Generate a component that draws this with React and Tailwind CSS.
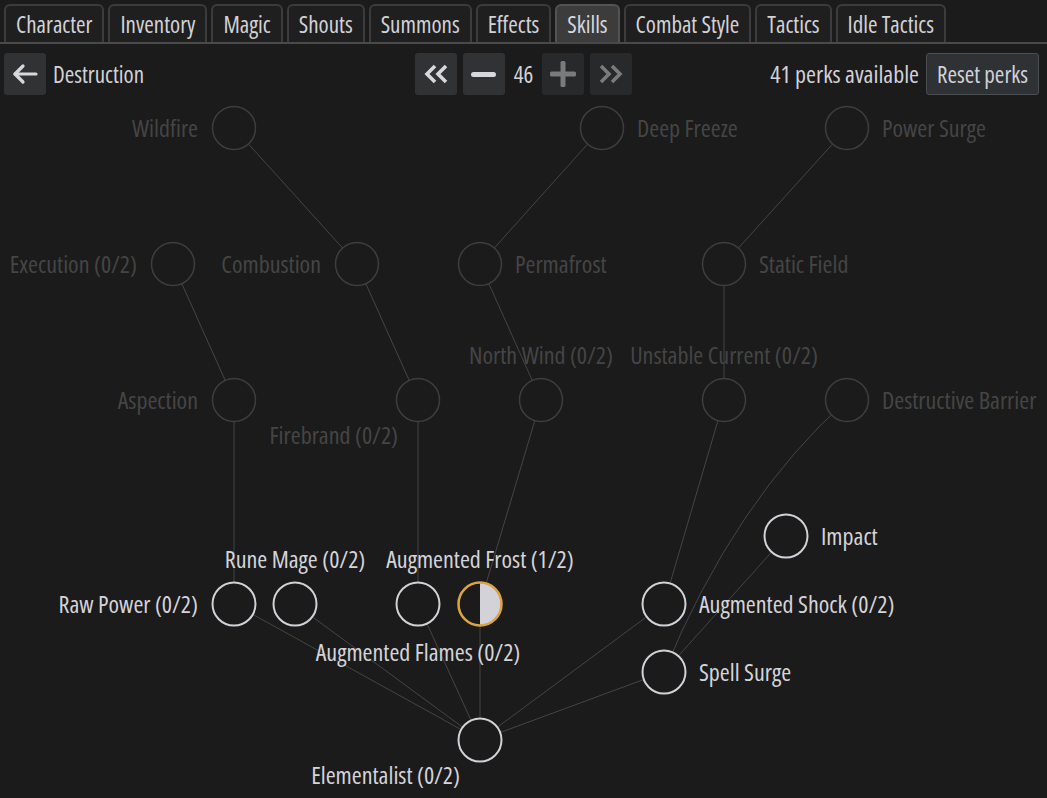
import React from 'react';

const TABS = ['Character', 'Inventory', 'Magic', 'Shouts', 'Summons', 'Effects', 'Skills', 'Combat Style', 'Tactics', 'Idle Tactics'];

// canvas starts below the toolbar, node coords are page coords
const TOP = 97;

const NODES = [
  { id: 'wildfire', label: 'Wildfire', x: 234, y: 128, pos: 'left' },
  { id: 'deepFreeze', label: 'Deep Freeze', x: 602, y: 128, pos: 'right' },
  { id: 'powerSurge', label: 'Power Surge', x: 847, y: 128, pos: 'right' },
  { id: 'execution', label: 'Execution (0/2)', x: 173, y: 264, pos: 'left' },
  { id: 'combustion', label: 'Combustion', x: 357, y: 264, pos: 'left' },
  { id: 'permafrost', label: 'Permafrost', x: 480, y: 264, pos: 'right' },
  { id: 'staticField', label: 'Static Field', x: 724, y: 264, pos: 'right' },
  { id: 'aspection', label: 'Aspection', x: 234, y: 400, pos: 'left' },
  { id: 'firebrand', label: 'Firebrand (0/2)', x: 418, y: 400, pos: 'bottomLeft' },
  { id: 'northWind', label: 'North Wind (0/2)', x: 541, y: 400, pos: 'top' },
  { id: 'unstable', label: 'Unstable Current (0/2)', x: 724, y: 400, pos: 'top' },
  { id: 'barrier', label: 'Destructive Barrier', x: 847, y: 400, pos: 'right' },
  { id: 'impact', label: 'Impact', x: 786, y: 536, pos: 'right', state: 'open' },
  { id: 'rawPower', label: 'Raw Power (0/2)', x: 234, y: 604, pos: 'left', state: 'open' },
  { id: 'runeMage', label: 'Rune Mage (0/2)', x: 295, y: 604, pos: 'top', state: 'open' },
  { id: 'augFlames', label: 'Augmented Flames (0/2)', x: 418, y: 604, pos: 'bottom', state: 'open' },
  { id: 'augFrost', label: 'Augmented Frost (1/2)', x: 480, y: 604, pos: 'top', state: 'half' },
  { id: 'augShock', label: 'Augmented Shock (0/2)', x: 664, y: 604, pos: 'right', state: 'open' },
  { id: 'spellSurge', label: 'Spell Surge', x: 664, y: 672, pos: 'right', state: 'open' },
  { id: 'elementalist', label: 'Elementalist (0/2)', x: 480, y: 740, pos: 'bottomLeft', state: 'open' },
];

const EDGES = [
  ['wildfire', 'combustion'],
  ['deepFreeze', 'permafrost'],
  ['powerSurge', 'staticField'],
  ['execution', 'aspection'],
  ['combustion', 'firebrand'],
  ['permafrost', 'northWind'],
  ['staticField', 'unstable'],
  ['aspection', 'rawPower'],
  ['firebrand', 'augFlames'],
  ['northWind', 'augFrost'],
  ['unstable', 'augShock'],
  ['impact', 'spellSurge'],
  ['rawPower', 'elementalist'],
  ['runeMage', 'elementalist'],
  ['augFlames', 'elementalist'],
  ['augFrost', 'elementalist'],
  ['augShock', 'elementalist'],
  ['spellSurge', 'elementalist'],
];

const byId = Object.fromEntries(NODES.map((n) => [n.id, n]));

const labelPlacement = {
  left: { dx: -36, dy: 0, cls: '-translate-x-full -translate-y-1/2' },
  right: { dx: 35, dy: 0, cls: '-translate-y-1/2' },
  top: { dx: 0, dy: -45, cls: '-translate-x-1/2 -translate-y-1/2' },
  bottom: { dx: 0, dy: 48, cls: '-translate-x-1/2 -translate-y-1/2' },
  bottomLeft: { dx: -20, dy: 35, cls: '-translate-x-full -translate-y-1/2' },
};

function Tabs() {
  return (
    <div className="flex gap-1 px-1 pt-1 border-b-2 border-[#4a4a4a]">
      {TABS.map((t) => {
        const active = t === 'Skills';
        return (
          <div
            key={t}
            className={`h-[38px] px-[10px] flex items-center border-2 border-b-0 rounded-t-[6px] text-[23px] leading-none ${
              active ? 'bg-[#3c3c3d] border-[#535354] text-[#d6d6dc]' : 'bg-[#1f1f1f] border-[#3c3c3e] text-[#d2d2d8]'
            }`}
          >
            {t}
          </div>
        );
      })}
    </div>
  );
}

function IconButton({ children, disabled }) {
  return (
    <div
      className={`w-[42px] h-[42px] rounded-[3px] flex items-center justify-center ${
        disabled ? 'bg-[#27292b] text-[#7a7b7d]' : 'bg-[#303234] text-[#d8d8dc]'
      }`}
    >
      {children}
    </div>
  );
}

function Toolbar() {
  return (
    <div className="grid grid-cols-3 items-center px-1 mt-[9px] h-[42px] text-[23px] leading-none text-[#d2d2d8]">
      <div className="flex items-center gap-[7px]">
        <IconButton>
          <svg width="28" height="22" viewBox="0 0 28 22" fill="none" stroke="currentColor" strokeWidth="3.2" strokeLinecap="round" strokeLinejoin="round">
            <path d="M25 11H4" />
            <path d="M12 3 4 11l8 8" />
          </svg>
        </IconButton>
        <span>Destruction</span>
      </div>
      <div className="flex items-center justify-center gap-[6px]">
        <IconButton>
          <svg width="26" height="20" viewBox="0 0 26 20" fill="none" stroke="currentColor" strokeWidth="3.6" strokeLinejoin="miter">
            <path d="M12 2 4 10l8 8" />
            <path d="M23 2l-8 8 8 8" />
          </svg>
        </IconButton>
        <IconButton>
          <div className="w-[25px] h-[5px] rounded-full bg-[#d8d8dc]" />
        </IconButton>
        <span className="px-[3px]">46</span>
        <IconButton disabled>
          <svg width="26" height="26" viewBox="0 0 26 26" fill="currentColor">
            <rect x="0" y="10.5" width="26" height="5" rx="1.5" />
            <rect x="10.5" y="0" width="5" height="26" rx="1.5" />
          </svg>
        </IconButton>
        <IconButton disabled>
          <svg width="26" height="20" viewBox="0 0 26 20" fill="none" stroke="currentColor" strokeWidth="3.6" strokeLinejoin="miter">
            <path d="M3 2l8 8-8 8" />
            <path d="M14 2l8 8-8 8" />
          </svg>
        </IconButton>
      </div>
      <div className="flex items-center justify-end gap-[7px] pr-1">
        <span className="text-[24px]">41 perks available</span>
        <div className="h-[42px] px-[10px] flex items-center rounded-[3px] border border-[#4b4e51] bg-[#2f3234]">
          Reset perks
        </div>
      </div>
    </div>
  );
}

function PerkTree() {
  return (
    <div className="relative mt-[2px] h-[701px] overflow-hidden">
      <svg className="absolute inset-0" width="1047" height="701" viewBox={`0 ${TOP} 1047 701`}>
        <g stroke="#454545" strokeWidth="1" fill="none">
          {EDGES.map(([a, b]) => (
            <line key={a + b} x1={byId[a].x} y1={byId[a].y} x2={byId[b].x} y2={byId[b].y} />
          ))}
          <path d="M847 400 Q 735 500 664 672" />
        </g>
        {NODES.map((n) => {
          if (n.state === 'half') {
            return (
              <g key={n.id}>
                <circle cx={n.x} cy={n.y} r="21.5" fill="#1b1b1b" />
                <path d={`M${n.x} ${n.y - 21} A21 21 0 0 1 ${n.x} ${n.y + 21} Z`} fill="#d2d2d8" />
                <circle cx={n.x} cy={n.y} r="21.5" fill="none" stroke="#dca443" strokeWidth="2.5" />
              </g>
            );
          }
          const open = n.state === 'open';
          return (
            <circle
              key={n.id}
              cx={n.x}
              cy={n.y}
              r="21.5"
              fill="#1b1b1b"
              stroke={open ? '#d2d2d8' : '#3e3e3e'}
              strokeWidth={open ? 2 : 1.5}
            />
          );
        })}
      </svg>
      {NODES.map((n) => {
        const p = labelPlacement[n.pos];
        return (
          <div
            key={n.id}
            className={`absolute whitespace-nowrap text-[24px] leading-none ${p.cls} ${
              n.state ? 'text-[#d4d4da]' : 'text-[#454545]'
            }`}
            style={{ left: n.x + p.dx, top: n.y - TOP + p.dy }}
          >
            {n.label}
          </div>
        );
      })}
    </div>
  );
}

export default function App() {
  return (
    <div className="w-[1047px] h-[798px] overflow-hidden bg-[#1b1b1b] font-['Open_Sans',sans-serif] font-stretch-condensed">
      <Tabs />
      <Toolbar />
      <PerkTree />
    </div>
  );
}
